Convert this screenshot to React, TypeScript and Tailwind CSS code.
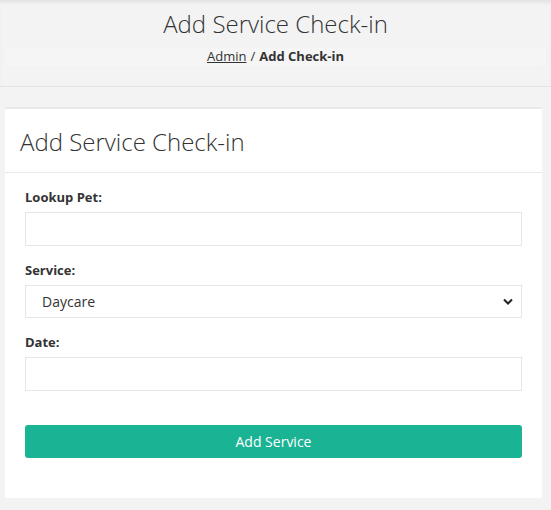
import React from 'react';

function Field({ label, children }: { label: string; children: React.ReactNode }) {
  return (
    <div className="mb-[15px]">
      <label className="block text-[13px] leading-[19px] font-bold text-[#333] mb-[5px]">{label}</label>
      {children}
    </div>
  );
}

function App() {
  return (
    <div className="min-h-[510px] bg-[#f3f3f4] text-[#676a6c]" style={{ fontFamily: '"Open Sans", "Liberation Sans", sans-serif' }}>
      <div className="h-[87px] border-b border-[#e4e4e4] shadow-[inset_0_4px_4px_-2px_rgba(0,0,0,0.08)] pt-[7px]">
        <h2 className="text-center text-[24px] leading-[34px] font-light text-[#333]">Add Service Check-in</h2>
        <div className="mx-[5px] mt-[6px] h-[19px] rounded bg-[#f5f5f5] flex items-center justify-center text-[13px] text-[#333]">
          <a href="#" className="underline">Admin</a>
          <span className="mx-[4px]">/</span>
          <strong className="font-bold">Add Check-in</strong>
        </div>
      </div>

      <div className="mt-[20px] ml-[5px] w-[537px] bg-white border-t-2 border-[#e7eaec]">
        <div className="h-[64px] border-b border-[#e7eaec] px-[15px] flex items-center">
          <h3 className="text-[24px] font-light text-[#333] leading-none pt-[3px]">Add Service Check-in</h3>
        </div>
        <div className="px-[20px] pt-[15px] pb-[40px]">
          <Field label="Lookup Pet:">
            <input type="text" className="block w-full h-[34px] border border-[#e5e6e7] bg-white px-3 text-[14px] outline-none" />
          </Field>
          <Field label="Service:">
            <div className="relative">
              <select defaultValue="Daycare" className="block w-full h-[33px] border border-[#e5e6e7] bg-white pl-[16px] pr-8 text-[14px] text-[#333] appearance-none outline-none">
                <option>Daycare</option>
                <option>Boarding</option>
                <option>Grooming</option>
              </select>
              <svg className="absolute right-[9px] top-[13px] pointer-events-none" width="10" height="7" viewBox="0 0 10 7">
                <path d="M1 1.5 L5 5.5 L9 1.5" fill="none" stroke="#222" strokeWidth="2" />
              </svg>
            </div>
          </Field>
          <Field label="Date:">
            <input type="text" className="block w-full h-[34px] border border-[#e5e6e7] bg-white px-3 text-[14px] outline-none" />
          </Field>
          <button className="mt-[34px] block w-full h-[33px] rounded-[3px] bg-[#1ab394] text-white text-[14px]">Add Service</button>
        </div>
      </div>
    </div>
  );
}

export default App;
